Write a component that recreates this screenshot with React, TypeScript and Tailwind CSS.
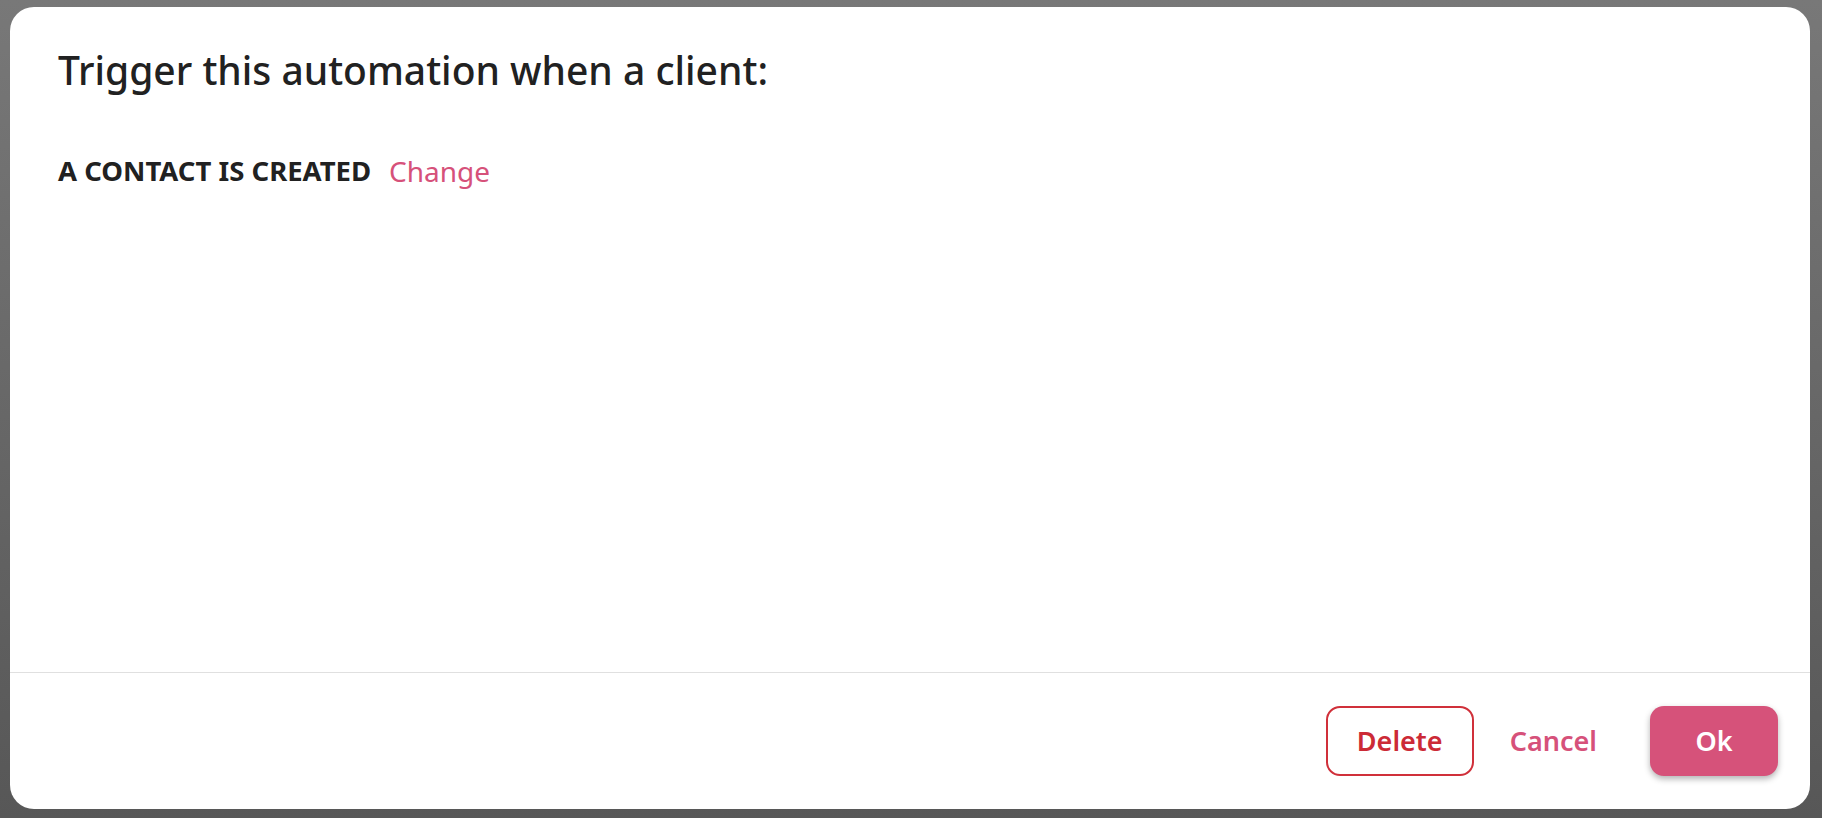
export default function App() {
  return (
    <div
      className="h-[818px] w-full bg-gradient-to-b from-[#787878] to-[#575757] pt-[7px] pl-[10px] pr-[12px] pb-[9px]"
      style={{ fontFamily: '"Noto Sans", "Open Sans", sans-serif' }}
    >
      <div className="flex h-full flex-col rounded-[24px] bg-white">
        {/* Body */}
        <div className="flex-1 px-[48px] pt-[40px]">
          <h2 className="text-[39px] leading-[46px] font-medium text-[#212121]">
            Trigger this automation when a client:
          </h2>
          <div className="mt-[60px] flex items-center gap-[18px] text-[27.5px] leading-[36px]">
            <span className="font-bold text-[#212121]">A CONTACT IS CREATED</span>
            <button className="text-[28px] text-[#d6517a]">Change</button>
          </div>
        </div>

        {/* Footer */}
        <div className="flex h-[137px] items-center justify-end border-t border-[#e0e0e0] px-[32px]">
          <button className="flex h-[70px] w-[148px] items-center justify-center rounded-[14px] border-2 border-[#d0303a] text-[27px] font-semibold text-[#cc2a36]">
            Delete
          </button>
          <button className="ml-[36px] mr-[53px] text-[27px] font-semibold text-[#d6517a]">
            Cancel
          </button>
          <button className="flex h-[70px] w-[128px] items-center justify-center rounded-[14px] bg-[#d6527a] text-[27px] font-semibold text-white shadow-[0_3px_6px_rgba(0,0,0,0.3)]">
            Ok
          </button>
        </div>
      </div>
    </div>
  );
}
